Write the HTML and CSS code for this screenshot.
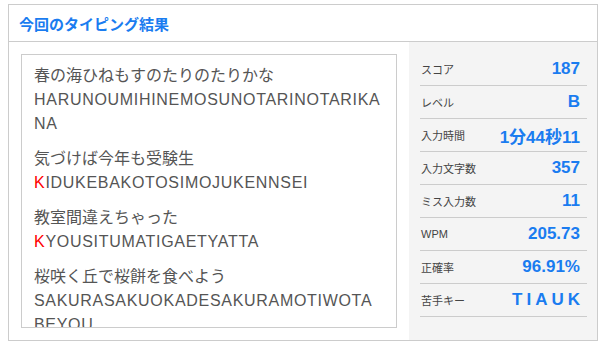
FILE: index.html
```html
<!DOCTYPE html>
<html lang="ja">
<head>
  <meta charset="UTF-8" />
  <meta name="viewport" content="width=device-width, initial-scale=1" />
  <title>今回のタイピング結果</title>
  <link rel="stylesheet" href="styles.css">
</head>
<body>
  <div class="result">
    <div class="result-header">
      <h2>今回のタイピング結果</h2>
    </div>
    <div class="result-body">
      <div class="result-main">
        <div class="history">
          <p class="item">
            <span class="jp">春の海ひねもすのたりのたりかな</span>
            <span class="roma">HARUNOUMIHINEMOSUNOTARINOTARIKANA</span>
          </p>
          <p class="item">
            <span class="jp">気づけば今年も受験生</span>
            <span class="roma"><span class="miss">K</span>IDUKEBAKOTOSIMOJUKENNSEI</span>
          </p>
          <p class="item">
            <span class="jp">教室間違えちゃった</span>
            <span class="roma"><span class="miss">K</span>YOUSITUMATIGAETYATTA</span>
          </p>
          <p class="item">
            <span class="jp">桜咲く丘で桜餅を食べよう</span>
            <span class="roma">SAKURASAKUOKADESAKURAMOTIWOTABEYOU</span>
          </p>
        </div>
      </div>
      <dl class="stats">
        <div class="stat"><dt>スコア</dt><dd>187</dd></div>
        <div class="stat"><dt>レベル</dt><dd>B</dd></div>
        <div class="stat"><dt>入力時間</dt><dd>1分44秒11</dd></div>
        <div class="stat"><dt>入力文字数</dt><dd>357</dd></div>
        <div class="stat"><dt>ミス入力数</dt><dd>11</dd></div>
        <div class="stat"><dt>WPM</dt><dd>205.73</dd></div>
        <div class="stat"><dt>正確率</dt><dd>96.91%</dd></div>
        <div class="stat"><dt>苦手キー</dt><dd class="keys">TIAUK</dd></div>
      </dl>
    </div>
  </div>
</body>
</html>
```

FILE: styles.css
```css
/* typing result panel */
body {
  margin: 4px 0 0 8px;
  background: #fff;
  font-family: "Liberation Sans", "Noto Sans CJK JP", sans-serif;
  color: #555;
}
.result {
  width: 590px;
  border: 1px solid #ccc;
  box-sizing: border-box;
}
.result-header {
  height: 37px;
  border-bottom: 1px solid #ccc;
  box-sizing: border-box;
  padding: 0 10px;
  display: flex;
  align-items: center;
}
.result-header h2 {
  margin: 0;
  font-size: 15px;
  font-weight: bold;
  color: #1a7cf0;
}
.result-body {
  display: flex;
  height: 298px;
}
.result-main {
  width: 400px;
  padding: 12px;
  box-sizing: border-box;
}
.history {
  height: 274px;
  border: 1px solid #ccc;
  box-sizing: border-box;
  padding: 9px 13.5px 9px 12px;
  overflow: hidden;
}
.item {
  margin: 0 0 11px;
  font-size: 16px;
  line-height: 24px;
  color: #555;
}
.item span.jp,
.item span.roma {
  display: block;
  word-break: break-all;
}
.item .roma {
  letter-spacing: 0.7px;
}
.miss {
  color: #f00;
}
.stats {
  flex: 1;
  margin: 0;
  background: #f4f4f4;
  padding: 11px 10px 0 11px;
}
.stat {
  display: flex;
  align-items: center;
  justify-content: space-between;
  height: 33px;
  border-bottom: 1px solid #ccc;
  box-sizing: border-box;
  padding: 0 7px 0 1px;
}
.stat dt {
  font-size: 11px;
  color: #444;
}
.stat dd {
  margin: 0;
  font-size: 17px;
  font-weight: bold;
  color: #1a7cf0;
}
.stat dd.keys {
  letter-spacing: 4px;
  margin-right: -4px;
}
```
